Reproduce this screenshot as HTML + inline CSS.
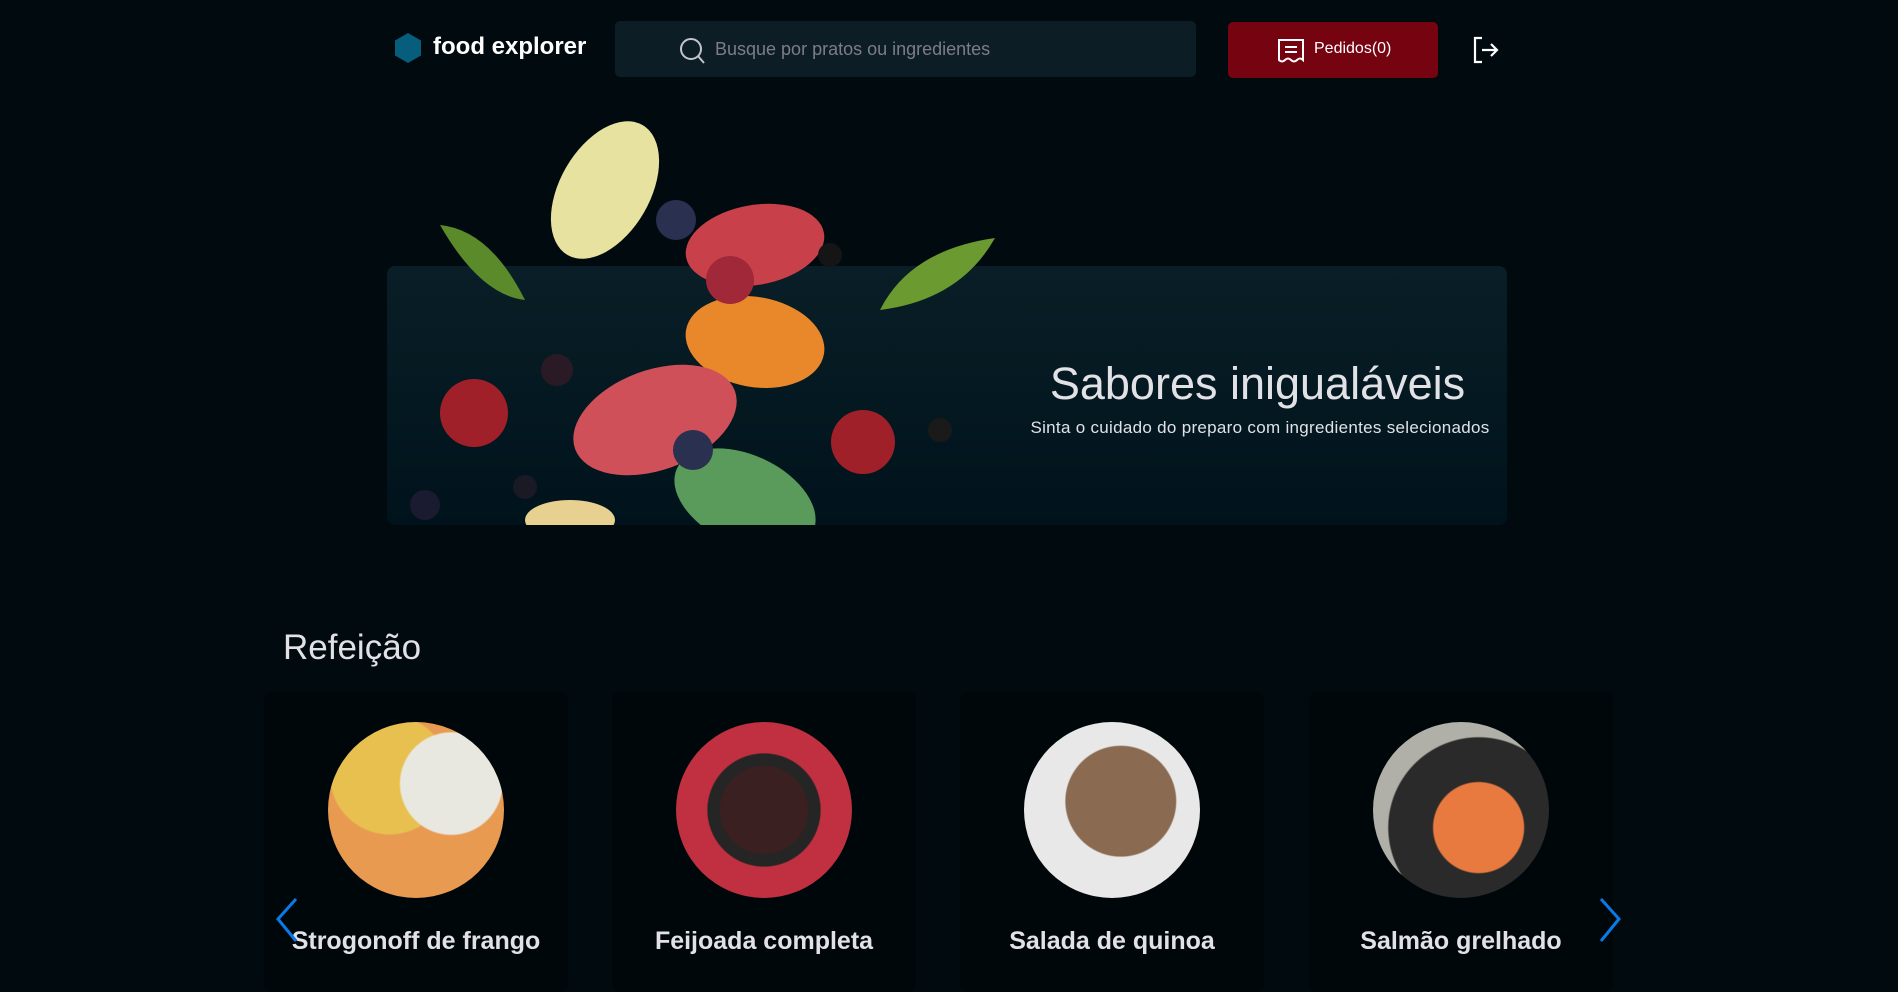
<!DOCTYPE html>
<html><head><meta charset="utf-8"><style>
*{margin:0;padding:0;box-sizing:border-box}
body{width:1898px;height:975px;overflow:hidden;background:#000a0f;font-family:"Liberation Sans",sans-serif;color:#e1e1e6;position:relative}
.abs{position:absolute}
.card{position:absolute;top:692px;width:304px;height:300px;background:#00070a;border-radius:8px}
.circ{position:absolute;left:64px;top:30px;width:176px;height:176px;border-radius:50%}
.name{position:absolute;left:0;width:100%;top:235px;text-align:center;font-weight:bold;font-size:25px;color:#e1e1e6}
</style></head><body>
<svg class="abs" style="left:393px;top:32px" width="30" height="32" viewBox="0 0 30 32"><polygon points="15,1 28,8.5 28,23.5 15,31 2,23.5 2,8.5" fill="#065e7c"/></svg>
<div class="abs" style="left:433px;top:33px;font-size:24px;font-weight:bold;color:#fff">food explorer</div>
<div class="abs" style="left:615px;top:21px;width:581px;height:56px;background:#0d1d25;border-radius:5px"></div>
<svg class="abs" style="left:678px;top:36px" width="30" height="30" viewBox="0 0 30 30"><circle cx="13" cy="13" r="10" fill="none" stroke="#c4c4cc" stroke-width="2"/><line x1="20" y1="20" x2="26" y2="27" stroke="#c4c4cc" stroke-width="2"/></svg>
<div class="abs" style="left:715px;top:39px;font-size:18px;color:#7c7c8a">Busque por pratos ou ingredientes</div>
<div class="abs" style="left:1228px;top:22px;width:210px;height:56px;background:#750310;border-radius:5px"></div>
<svg class="abs" style="left:1277px;top:38px" width="28" height="26" viewBox="0 0 28 26"><path d="M2 2H26V22Q23 19 20 22Q17 25 14 22Q11 19 8 22Q5 25 2 22Z" fill="none" stroke="#fff" stroke-width="2"/><line x1="8" y1="9" x2="20" y2="9" stroke="#fff" stroke-width="2"/><line x1="8" y1="14" x2="20" y2="14" stroke="#fff" stroke-width="2"/></svg>
<div class="abs" style="left:1314px;top:40px;font-size:16px;color:#fff">Pedidos(0)</div>
<svg class="abs" style="left:1472px;top:36px" width="28" height="28" viewBox="0 0 28 28"><path d="M10 2H3V26H10" fill="none" stroke="#fff" stroke-width="2.2"/><path d="M10 14H25M19 8L25 14L19 20" fill="none" stroke="#fff" stroke-width="2.2"/></svg>
<div class="abs" style="left:387px;top:266px;width:1120px;height:259px;border-radius:8px;background:linear-gradient(180deg,#091e26,#00131c)"></div>
<svg class="abs" style="left:400px;top:120px" width="620" height="405" viewBox="0 0 620 405">
<defs><clipPath id="c"><rect x="0" y="0" width="620" height="405"/></clipPath></defs>
<g clip-path="url(#c)">
<path d="M40 105Q90 110 125 180Q80 175 40 105Z" fill="#5a8a2a"/>
<path d="M595 118Q560 180 480 190Q510 130 595 118Z" fill="#6a9a30"/>
<ellipse cx="205" cy="70" rx="45" ry="75" transform="rotate(30 205 70)" fill="#e8e2a0"/>
<ellipse cx="355" cy="125" rx="70" ry="40" transform="rotate(-10 355 125)" fill="#c8404a"/>
<ellipse cx="355" cy="222" rx="70" ry="45" transform="rotate(10 355 222)" fill="#e8882a"/>
<ellipse cx="255" cy="300" rx="85" ry="50" transform="rotate(-20 255 300)" fill="#d0505a"/>
<ellipse cx="345" cy="380" rx="75" ry="45" transform="rotate(25 345 380)" fill="#5a9a5a"/>
<ellipse cx="170" cy="400" rx="45" ry="20" fill="#e8d090"/>
<circle cx="74" cy="293" r="34" fill="#a0202a"/>
<circle cx="463" cy="322" r="32" fill="#a0202a"/>
<circle cx="330" cy="160" r="24" fill="#a02838"/>
<circle cx="276" cy="100" r="20" fill="#2a3050"/>
<circle cx="293" cy="330" r="20" fill="#2a3050"/>
<circle cx="157" cy="250" r="16" fill="#2a1a25"/>
<circle cx="540" cy="310" r="12" fill="#1a1a1a"/>
<circle cx="25" cy="385" r="15" fill="#1a1a30"/>
<circle cx="125" cy="367" r="12" fill="#1a1a25"/>
<circle cx="430" cy="135" r="12" fill="#151515"/>
</g></svg>
<div class="abs" style="left:1030px;top:358px;width:455px;text-align:center;font-size:45px;color:#e1e1e6">Sabores inigualáveis</div>
<div class="abs" style="left:990px;top:418px;width:540px;text-align:center;font-size:17px;letter-spacing:0.3px;color:#e1e1e6">Sinta o cuidado do preparo com ingredientes selecionados</div>
<div class="abs" style="left:283px;top:628px;font-size:35px;color:#e1e1e6">Refeição</div>
<div class="card" style="left:264px"><div class="circ" style="background:radial-gradient(circle at 70% 35%,#e8e8e0 0 30%,transparent 31%),radial-gradient(circle at 35% 30%,#e8c050 0 35%,#e89a50 36%)"></div><div class="name">Strogonoff de frango</div></div>
<div class="card" style="left:612px"><div class="circ" style="background:radial-gradient(circle,#3a2020 0 35%,#252525 36% 45%,#c03040 46%)"></div><div class="name">Feijoada completa</div></div>
<div class="card" style="left:960px"><div class="circ" style="background:radial-gradient(circle at 55% 45%,#8a6a50 0 40%,#e8e8e8 41%)"></div><div class="name">Salada de quinoa</div></div>
<div class="card" style="left:1309px"><div class="circ" style="background:radial-gradient(circle at 60% 60%,#e87a40 0 30%,#2a2a2a 31% 60%,#b0b0a8 61%)"></div><div class="name">Salmão grelhado</div></div>
<svg class="abs" style="left:272px;top:895px" width="30" height="50" viewBox="0 0 30 50"><path d="M24 4L6 24L24 46" fill="none" stroke="#0a7ae8" stroke-width="3"/></svg>
<svg class="abs" style="left:1595px;top:895px" width="30" height="50" viewBox="0 0 30 50"><path d="M6 4L24 24L6 46" fill="none" stroke="#0a7ae8" stroke-width="3"/></svg>
</body></html>
